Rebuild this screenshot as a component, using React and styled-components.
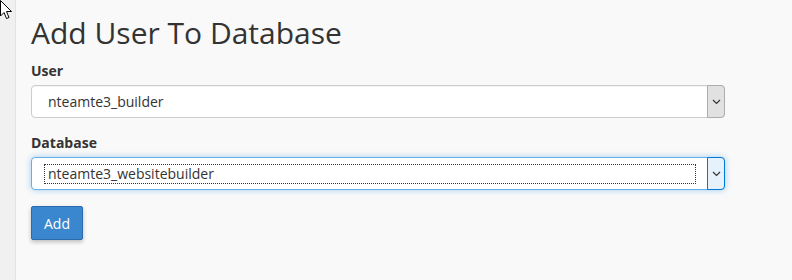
import React from "react";
import styled, { createGlobalStyle } from "styled-components";

const Global = createGlobalStyle`
  html, body {
    margin: 0;
    padding: 0;
    background: #f8f8f8;
    font-family: "Open Sans", "Noto Sans", sans-serif;
    color: #333;
  }
`

const Page = styled.div`
  display: flex;
  width: 792px;
  height: 280px;
  position: relative;
  overflow: hidden;
`

const Sidebar = styled.div`
  width: 15px;
  flex: none;
  background: #f0f0f0;
  box-shadow: 1px 0 2px rgba(0, 0, 0, 0.12);
  border-right: 1px solid #e2e2e2;
`

const Main = styled.main`
  flex: 1;
  padding: 13px 0 0 15px;
  background: #f9f9f9;
`

const Title = styled.h1`
  margin: 0 0 8px;
  font-size: 30px;
  font-weight: 400;
  line-height: 40px;
  color: #333;
`

const Field = styled.div`
  width: 694px;
  margin-bottom: 15px;
`

const Label = styled.label`
  display: block;
  font-size: 14px;
  font-weight: 700;
  line-height: 20px;
  margin-bottom: 4px;
`

const Select = styled.div`
  display: flex;
  align-items: stretch;
  height: 33px;
  box-sizing: border-box;
  background: #fff;
  border: 1px solid ${p => (p.$focused ? "#66afe9" : "#ccc")};
  border-radius: 4px;
  box-shadow: ${p => (p.$focused ? "0 0 6px rgba(102, 175, 233, 0.6)" : "inset 0 1px 1px rgba(0,0,0,0.04)")};
  font-size: 14px;
  line-height: 20px;
  color: #333;
`

const Value = styled.div`
  flex: 1;
  display: flex;
  align-items: center;
  padding: 0 0 0 ${p => (p.$focused ? "12px" : "16px")};
`

const FocusRing = styled.span`
  flex: 1;
  margin-right: 11px;
  padding: 0 0 0 3px;
  border: 1px dotted #333;
  line-height: 18px;
`

const Arrow = styled.div`
  width: 16px;
  display: flex;
  align-items: center;
  justify-content: center;
  background: ${p => (p.$focused ? "#e5f1fb" : "#e1e1e1")};
  border: 1px solid ${p => (p.$focused ? "#0078d7" : "#adadad")};
  margin: -1px -1px -1px 0;
  border-radius: 0 4px 4px 0;
  color: #333;
`

const Button = styled.button`
  font-family: inherit;
  font-size: 14px;
  color: #fff;
  background: #3a87cf;
  border: 1px solid #2b6cad;
  border-radius: 2px;
  width: 52px;
  padding: 0;
  height: 34px;
  margin-top: 1px;
  box-shadow: 0 2px 4px rgba(0, 0, 0, 0.25);
`

const Cursor = styled.svg`
  position: absolute;
  left: 0;
  top: 0;
`

const Chevron = () => (
  <svg width="9" height="6" viewBox="0 0 9 6">
    <path d="M1 1 L4.5 4.5 L8 1" fill="none" stroke="#333" strokeWidth="1.2" />
  </svg>
)

const SelectField = ({ label, value, focused }) => (
  <Field>
    <Label>{label}</Label>
    <Select $focused={focused}>
      <Value $focused={focused}>
        {focused ? <FocusRing>{value}</FocusRing> : value}
      </Value>
      <Arrow $focused={focused}>
        <Chevron />
      </Arrow>
    </Select>
  </Field>
)

const App = () => {
  return (
    <>
      <Global />
      <Page>
        <Sidebar />
        <Main>
          <Title>Add User To Database</Title>
          <SelectField label="User" value="nteamte3_builder" />
          <SelectField label="Database" value="nteamte3_websitebuilder" focused />
          <Button>Add</Button>
        </Main>
        <Cursor width="13" height="20" viewBox="0 0 13 20">
          <path d="M0.5 0.5 L0.5 16 L4 12.5 L6.5 18.5 L9 17.5 L6.5 11.5 L11.5 11.5 Z" fill="#fff" stroke="#000" strokeWidth="1" />
        </Cursor>
      </Page>
    </>
  )
}

export default App
